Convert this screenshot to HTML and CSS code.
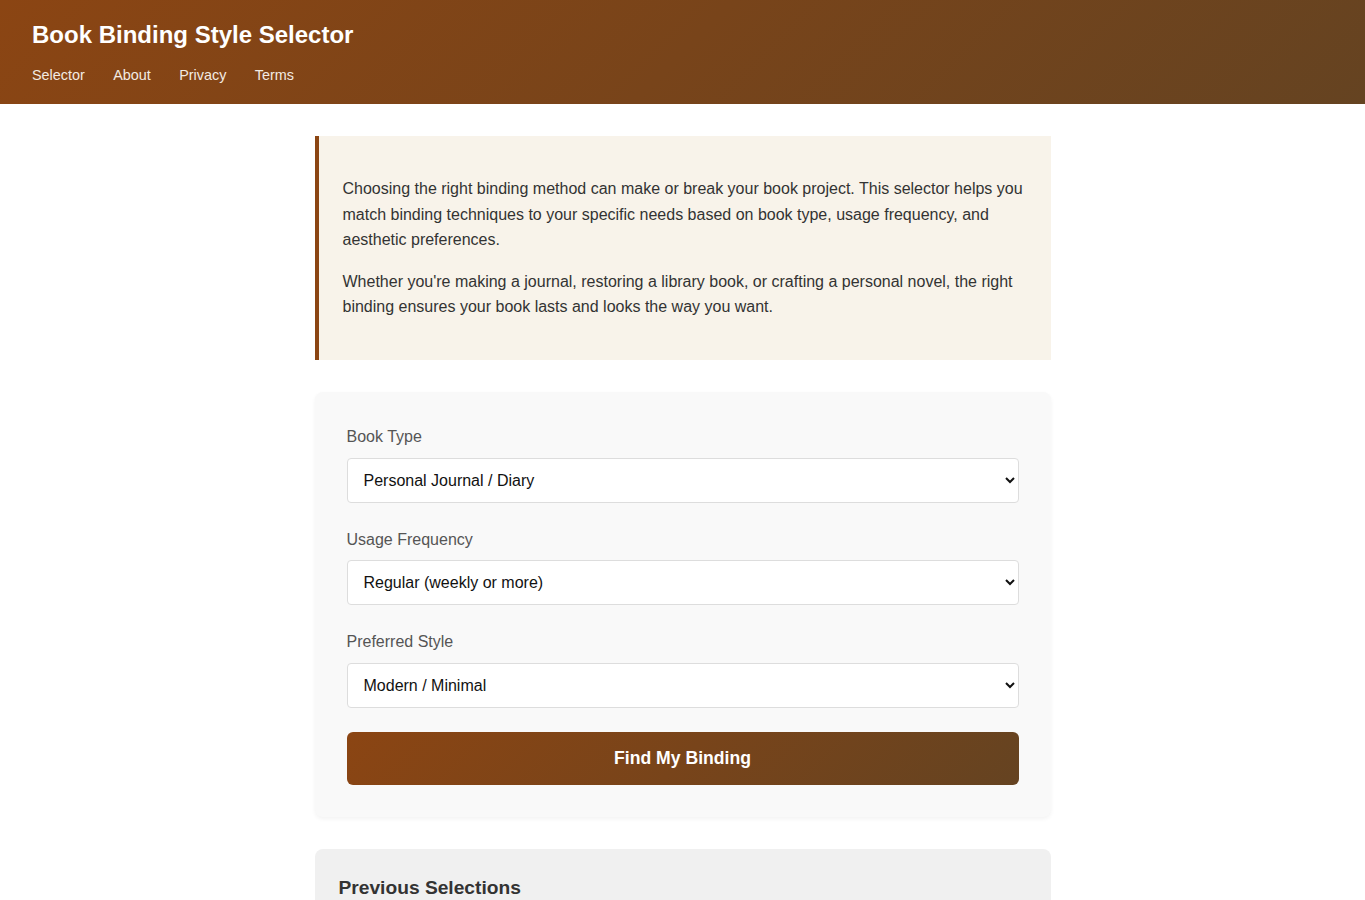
FILE: index.html
```html
<!doctype html>
<html>

<head>
	<title>Book Binding Style Selector</title>
	<link rel="stylesheet" href="styles.css">
</head>

<body>
	<header class="site-header">
		<h1>Book Binding Style Selector</h1>
		<nav class="site-nav">
			<a href="#">Selector</a>
			<a href="#">About</a>
			<a href="#">Privacy</a>
			<a href="#">Terms</a>
		</nav>
	</header>

	<main class="container">
		<section class="intro">
			<p>Choosing the right binding method can make or break your book project. This selector helps you match binding techniques to your specific needs based on book type, usage frequency, and aesthetic preferences.</p>
			<p>Whether you're making a journal, restoring a library book, or crafting a personal novel, the right binding ensures your book lasts and looks the way you want.</p>
		</section>

		<form class="selector" action="#">
			<div class="field">
				<label for="book_type">Book Type</label>
				<select id="book_type">
					<option selected>Personal Journal / Diary</option>
					<option>Novel / Paperback</option>
					<option>Library Book Restoration</option>
				</select>
			</div>
			<div class="field">
				<label for="usage">Usage Frequency</label>
				<select id="usage">
					<option selected>Regular (weekly or more)</option>
					<option>Occasional</option>
					<option>Rare / Display</option>
				</select>
			</div>
			<div class="field">
				<label for="style">Preferred Style</label>
				<select id="style">
					<option selected>Modern / Minimal</option>
					<option>Classic / Traditional</option>
					<option>Rustic / Handmade</option>
				</select>
			</div>
			<button type="submit" class="btn-find">Find My Binding</button>
		</form>

		<section class="history">
			<h3>Previous Selections</h3>
		</section>
	</main>
</body>

</html>
```

FILE: styles.css
```css
body {
	margin: 0;
	font-family: "Liberation Sans", Arial, sans-serif;
	color: #333;
	background: #fff;
	line-height: 1.6;
}

.site-header {
	background: linear-gradient(135deg, #8b4513, #654321);
	color: #fff;
	padding: 19px 32px 21px;
}

.site-header h1 {
	margin: 0 0 16px;
	font-size: 24px;
	line-height: 32px;
}

.site-nav {
	display: flex;
	gap: 28.4px;
	font-size: 14.4px;
	line-height: 16px;
}

.site-nav a {
	color: #f3ebe2;
	text-decoration: none;
}

.container {
	width: 736px;
	margin: 32px auto 0;
}

.intro {
	background: #f8f3ea;
	border-left: 4px solid #8b4513;
	padding: 24px;
	margin-bottom: 32px;
}

.intro p {
	margin: 16px 0;
	font-size: 16px;
	color: #333;
}

.selector {
	background: #f9f9f9;
	border-radius: 8px;
	box-shadow: 0 2px 4px rgba(0, 0, 0, 0.05);
	padding: 32px;
	margin-bottom: 32px;
}

.field {
	margin-bottom: 24px;
}

.field label {
	display: block;
	margin-bottom: 8px;
	font-size: 16px;
	color: #555;
}

.field select {
	display: block;
	width: 100%;
	padding: 12px;
	font-family: "Liberation Sans", Arial, sans-serif;
	font-size: 16px;
	color: #111;
	background: #fff;
	border: 1px solid #ddd;
	border-radius: 4px;
}

.btn-find {
	display: block;
	width: 100%;
	padding: 16px;
	border: none;
	border-radius: 6px;
	background: linear-gradient(135deg, #8b4513, #654321);
	color: #fff;
	font-family: "Liberation Sans", Arial, sans-serif;
	font-size: 17.6px;
	font-weight: bold;
	line-height: 21px;
	cursor: pointer;
}

.history {
	background: #f0f0f0;
	border-radius: 8px;
	padding: 28px 24px 24px;
	min-height: 200px;
}

.history h3 {
	margin: 0 0 16px;
	font-size: 19.2px;
	line-height: 22px;
	color: #333;
}
```
